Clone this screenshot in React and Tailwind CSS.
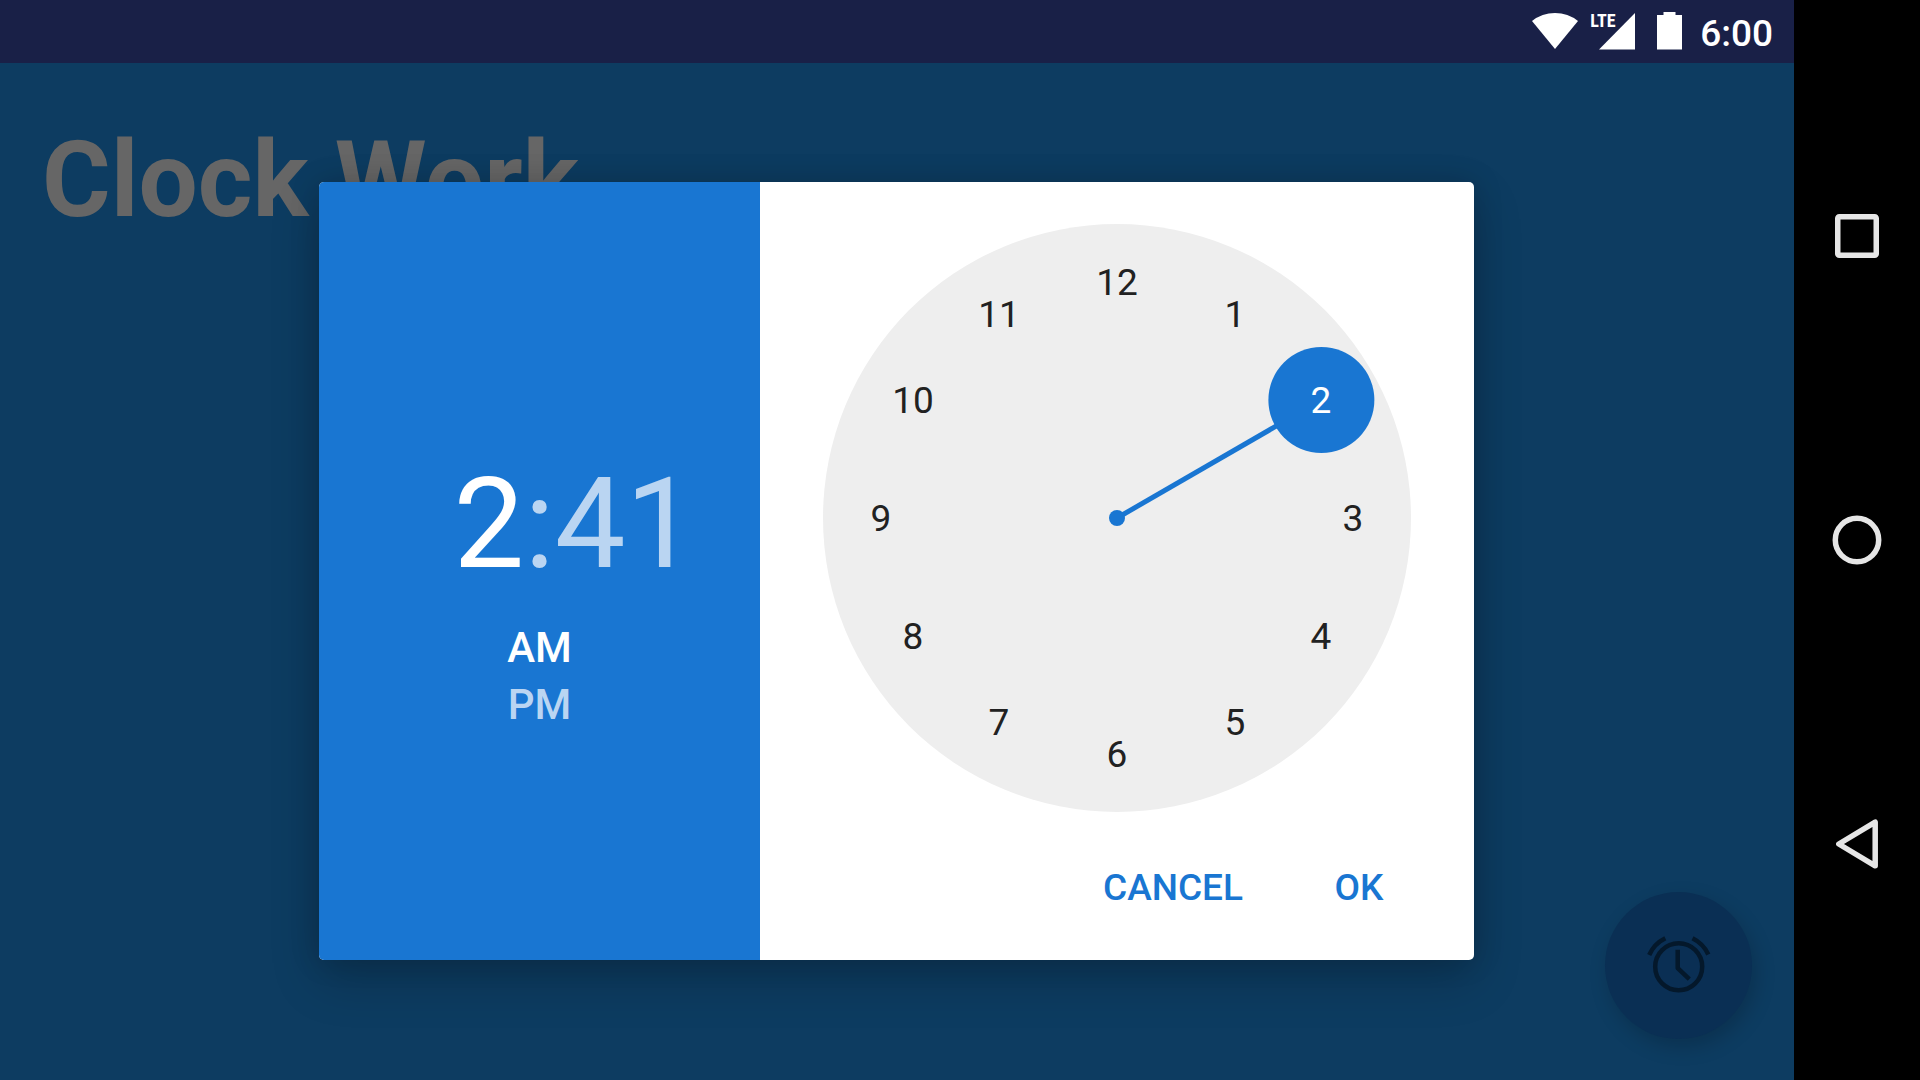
import { useState } from 'react';

const hours = [12, 1, 2, 3, 4, 5, 6, 7, 8, 9, 10, 11];

// face is 588 wide, numbers sit on a ring of radius 236
const FACE = 588;
const RING = 236;

function hourPosition(hour) {
  const angle = (hour * Math.PI) / 6;
  return {
    x: FACE / 2 + RING * Math.sin(angle),
    y: FACE / 2 - RING * Math.cos(angle),
  };
}

function StatusBar() {
  return (
    <header className="flex h-[63px] items-center justify-end bg-[#192047] pr-[21px] text-white">
      <div className="mr-[18px] flex pb-0.5">
        <svg className="mr-3 h-[38px] w-[46px]" viewBox="0 0 46 38" fill="currentColor" aria-hidden="true">
          <path d="M23 37 L0 9 Q10 1 23 1 Q36 1 46 9 Z" />
        </svg>
        <div className="relative mr-[22px] h-[38px] w-[45px]">
          <svg className="h-full w-full" viewBox="0 0 45 38" fill="currentColor" aria-hidden="true">
            <path d="M45 1 V37.500 H9 Z" />
          </svg>
          <span className="absolute left-0 top-0 font-['Roboto_Condensed','Liberation_Sans_Narrow',Roboto,sans-serif] text-[18px] font-bold leading-[18px]">
            LTE
          </span>
        </div>
        <svg className="h-[38px] w-[25px]" viewBox="0 0 25 38" fill="currentColor" aria-hidden="true">
          <path d="M6.500 0 H18.500 V3 H25 V37.500 H0 V3 H6.500 Z" />
        </svg>
      </div>
      <span className="pt-1 text-[37px] font-medium leading-[42px]">6:00</span>
    </header>
  );
}

function NavBar() {
  return (
    <nav className="flex w-[126px] shrink-0 flex-col bg-black py-[84px] text-[#e6e6e6]">
      <button aria-label="Overview" className="flex flex-1 items-center justify-center">
        <svg className="size-14" viewBox="0 0 56 56" fill="none" stroke="currentColor" strokeWidth="5.500">
          <rect x="8.750" y="8.750" width="38.500" height="38.500" rx="1.500" />
        </svg>
      </button>
      <button aria-label="Home" className="flex flex-1 items-center justify-center">
        <svg className="size-14" viewBox="0 0 56 56" fill="none" stroke="currentColor" strokeWidth="5.500">
          <circle cx="28" cy="28" r="21.700" />
        </svg>
      </button>
      <button aria-label="Back" className="flex flex-1 items-center justify-center">
        <svg className="size-14" viewBox="0 0 56 56" fill="none" stroke="currentColor" strokeWidth="5.500" strokeLinejoin="round">
          <path d="M46.200 6.200 V49.800 L9.800 28 Z" />
        </svg>
      </button>
    </nav>
  );
}

function ClockFace({ hour, onSelect }) {
  const hand = hourPosition(hour);

  return (
    <div className="relative size-[588px] rounded-full bg-[#eeeeee]">
      <svg className="size-full text-[#1976d2]" viewBox="0 0 588 588" fill="currentColor" aria-hidden="true">
        <line x1="294" y1="294" x2={hand.x} y2={hand.y} stroke="currentColor" strokeWidth="5" />
        <circle cx="294" cy="294" r="8" />
        <circle cx={hand.x} cy={hand.y} r="53" />
      </svg>
      {hours.map((h) => {
        const { x, y } = hourPosition(h);
        return (
          <button
            key={h}
            onClick={() => onSelect(h)}
            className={`absolute size-[106px] -translate-x-1/2 -translate-y-1/2 rounded-full pt-0.5 text-[37px] leading-[42px] ${
              h === hour ? 'text-white' : 'text-[#212121]'
            }`}
            style={{ left: Math.round(x), top: Math.round(y) }}
          >
            {h}
          </button>
        );
      })}
    </div>
  );
}

function TimePicker() {
  const [hour, setHour] = useState(2);
  const [period, setPeriod] = useState('AM');
  const [field, setField] = useState('hour'); // hour, minute

  return (
    <div
      role="dialog"
      aria-label="Time"
      className="flex overflow-hidden rounded-[5px] bg-white shadow-[0_20px_50px_rgba(0,0,0,0.2),0_0_30px_rgba(0,0,0,0.16)]"
    >
      <div className="flex w-[441px] flex-col items-center justify-center bg-[#1976d2] pt-[51px] text-white">
        <div className="grid grid-cols-[1fr_auto_1fr] text-[126px] leading-[126px]">
          <button
            onClick={() => setField('hour')}
            className={`text-right ${field === 'hour' ? '' : 'text-[#bad5f2]'}`}
          >
            {hour}
          </button>
          <span className="text-[#bad5f2]">:</span>
          <button
            onClick={() => setField('minute')}
            className={`text-left ${field === 'minute' ? '' : 'text-[#bad5f2]'}`}
          >
            41
          </button>
        </div>
        <div className="mt-8 flex flex-col text-[42px] font-medium leading-[57px]">
          {['AM', 'PM'].map((p) => (
            <button
              key={p}
              onClick={() => setPeriod(p)}
              className={p === period ? 'text-white' : 'text-[#bad5f2]'}
            >
              {p}
            </button>
          ))}
        </div>
      </div>

      <div className="flex w-[714px] flex-col items-center pt-[42px]">
        <ClockFace hour={hour} onSelect={setHour} />
        <div className="flex h-[148px] w-full items-center justify-end gap-[11px] pr-[31px] pt-1 text-[37px] font-medium leading-[42px] text-[#1976d2]">
          <button className="px-[21px] py-5">CANCEL</button>
          <button className="min-w-[168px] px-[21px] py-5">OK</button>
        </div>
      </div>
    </div>
  );
}

function App() {
  return (
    <div className="flex min-h-screen bg-[#0d3c61] font-[Roboto,sans-serif]">
      <div className="flex flex-1 flex-col">
        <StatusBar />
        <main className="relative flex flex-1 flex-col justify-between p-[42px] pb-[41px]">
          <h1 className="mt-3.5 text-[105px] font-bold leading-[124px] text-[#666666]">Clock Work</h1>

          <button
            aria-label="Set alarm"
            className="flex size-[147px] items-center justify-center self-end rounded-full bg-[#0a2f54] text-[#04182b] shadow-[4px_8px_20px_rgba(0,0,0,0.18)]"
          >
            <svg className="size-[72px]" viewBox="0 0 72 72" fill="none" stroke="currentColor" strokeWidth="4.500">
              <circle cx="35.700" cy="36.800" r="23.500" />
              <path d="M34.700 19.800 V38.100 L46.300 49.200" strokeLinejoin="round" />
              <path d="M6.200 25 A34 34 0 0 1 22.300 8.300 M49.500 8.300 A34 34 0 0 1 65.300 24.500" />
            </svg>
          </button>

          {/* Time picker dialog */}
          <div className="absolute inset-0 flex items-center justify-center pb-px pr-px">
            <TimePicker />
          </div>
        </main>
      </div>
      <NavBar />
    </div>
  );
}

export default App;
